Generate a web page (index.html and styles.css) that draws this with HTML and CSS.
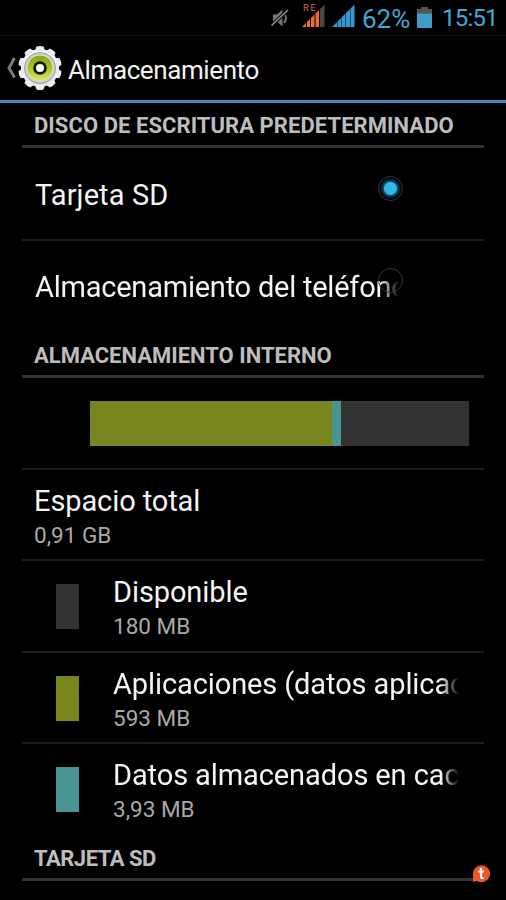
FILE: index.html
```html
<!DOCTYPE html>
<html lang="es">
<head>
<meta charset="utf-8">
<title>Almacenamiento</title>
<link rel="stylesheet" href="styles.css">
</head>
<body>
<div class="statusbar">
  <svg class="icon-mute" width="20" height="22" viewBox="0 0 20 22"><path d="M3 7.500h4l5.500-5v17l-5.500-5H3z" fill="#777"/><path d="M14 6q4 5 0 10" fill="none" stroke="#777" stroke-width="2"/><path d="M1.500 18.500 18 3" stroke="#000" stroke-width="3.600"/><path d="M1.500 18.500 18 3" stroke="#929292" stroke-width="1.600"/></svg>
  <div class="roaming">
    <span class="roaming-label">RE</span>
    <svg width="24" height="24" viewBox="0 0 24 24"><g fill="#f1692c"><path d="M0 23l4-4v4zM5 18l3-3v8H5zM9 14l3.500-3.500V23H9zM13.500 9.500 17 6v17h-3.500z"/></g><path d="M18 5l4.500-4.500V23H18z" fill="#4b4744"/></svg>
  </div>
  <svg class="icon-signal" width="24" height="24" viewBox="0 0 24 24"><path d="M0 23l5-5v5zM5.500 17.500l3.500-3.500v9H5.500zM9.500 13.500l4-4V23h-4zM14 9l4-4v18h-4zM18.500 4.500 22.500.500V23h-4z" fill="#3697cf"/></svg>
  <span class="percent">62%</span>
  <svg class="icon-battery" width="16" height="22" viewBox="0 0 16 22"><path d="M4 0h7v2h4v6H0V2h4z" fill="#555"/><path d="M0 6.500h15V21H0z" fill="#3f9cc7"/></svg>
  <span class="clock">15:51</span>
</div>
<header class="actionbar">
  <svg class="back" width="10" height="22" viewBox="0 0 10 22"><path d="M8.500 1 3 11l5.500 9.500" fill="none" stroke="#7c7c7c" stroke-width="3"/></svg>
  <svg class="gear" width="46" height="46" viewBox="-23 -23 46 46">
    <defs>
      <linearGradient id="rim" x1="0" y1="0" x2="0" y2="1"><stop offset="0" stop-color="#fff"/><stop offset="1" stop-color="#dedee2"/></linearGradient>
      <linearGradient id="green" x1="0" y1="0" x2="0" y2="1"><stop offset="0" stop-color="#86a615"/><stop offset=".5" stop-color="#a8c51c"/><stop offset="1" stop-color="#dbe66c"/></linearGradient>
    </defs>
    <circle r="19" fill="url(#rim)"/>
    <g fill="#ececf0">
      <g id="teeth"><path id="tooth" d="M-5-17l1.500-4.500q3.500-1 7 0L5-17z"/><use href="#tooth" transform="rotate(36)"/><use href="#tooth" transform="rotate(72)"/><use href="#tooth" transform="rotate(108)"/><use href="#tooth" transform="rotate(144)"/></g>
      <use href="#teeth" transform="rotate(180)"/>
    </g>
    <circle r="15.500" fill="#c9cbd5" stroke="#9b9da5" stroke-width="1"/>
    <circle r="13" fill="url(#green)" stroke="#dfe5b4" stroke-width="1"/>
    <circle r="6.800" fill="#11180a"/>
    <circle r="4" fill="#fff"/>
  </svg>
  <h1 class="title">Almacenamiento</h1>
</header>
<main class="list">
  <h2 class="section first"><span>DISCO DE ESCRITURA PREDETERMINADO</span></h2>
  <div class="row choice sd"><span class="name">Tarjeta SD</span><i class="radio on"></i></div>
  <div class="row choice last"><span class="name fade phone">Almacenamiento del teléfono</span><i class="radio"></i></div>
  <h2 class="section"><span>ALMACENAMIENTO INTERNO</span></h2>
  <div class="row usage"><div class="bar"><i class="apps"></i><i class="cache"></i></div></div>
  <div class="row total"><div class="text"><span class="name">Espacio total</span><span class="value">0,91 GB</span></div></div>
  <div class="row item"><i class="swatch free"></i><div class="text"><span class="name">Disponible</span><span class="value">180 MB</span></div></div>
  <div class="row item"><i class="swatch apps"></i><div class="text"><span class="name fade">Aplicaciones (datos aplicación)</span><span class="value">593 MB</span></div></div>
  <div class="row item last end"><i class="swatch cache"></i><div class="text"><span class="name fade">Datos almacenados en caché</span><span class="value">3,93 MB</span></div></div>
  <h2 class="section card"><span>TARJETA SD</span></h2>
</main>
<svg class="badge" width="20" height="20" viewBox="0 0 20 20"><path d="M2 18V10A8.500 8.500 0 1 1 6 17z" fill="#ef5722"/><path d="M10 4v8.500q0 2 2.500 1.500M7 7.500h6" fill="none" stroke="#fff" stroke-width="2.200"/></svg>
</body>
</html>
```

FILE: styles.css
```css
* { box-sizing: border-box; }
body { margin: 0; width: 506px; height: 900px; overflow: hidden; background: #000; color: #f4f4f4; font-family: Roboto, "Liberation Sans", sans-serif; position: relative; }
svg { display: block; flex: none; }
.statusbar { height: 36px; display: flex; align-items: flex-start; color: #45a7d6; border-bottom: 1px solid #0c0c0c; white-space: nowrap; }
.icon-mute { margin: 7px 0 0 270px; }
.roaming { position: relative; margin: 4px 0 0 12px; width: 24px; }
.roaming-label { position: absolute; left: 1px; top: -1px; font-size: 9px; line-height: 10px; letter-spacing: 2px; color: #d96b48; }
.icon-signal { margin: 4px 0 0 6px; }
.percent { width: 54px; margin: 3px 0 0 6px; font-size: 26px; line-height: 32px; }
.icon-battery { margin: 7px 0 0 1px; }
.clock { margin: 2px 0 0 9px; font-size: 24px; line-height: 32px; letter-spacing: -.8px; }
.actionbar { height: 67px; display: flex; align-items: center; border-bottom: 3px solid #4786b8; }
.back { margin-left: 6px; }
.gear { margin-left: 1px; }
.title { margin: 4px 0 0 5px; font-size: 26px; font-weight: 400; line-height: 34px; letter-spacing: -.4px; }
.list { margin: 0 22px; }
.section { margin: 0; height: 46px; border-bottom: 3px solid #323232; padding: 9px 0 0 12px; color: #bdbdbd; font-size: 22px; line-height: 30px; font-weight: 700; white-space: nowrap; }
.section.first { height: 45px; padding-top: 8px; letter-spacing: .06px; }
.section.card { letter-spacing: -.5px; }
.row { height: 91.5px; border-bottom: 2px solid #1d1d1d; display: flex; }
.row.last { border-bottom-color: transparent; }
.name { display: block; font-size: 29px; line-height: 34px; letter-spacing: -.1px; white-space: nowrap; overflow: hidden; }
.value { display: block; font-size: 22.5px; line-height: 28px; margin-top: 3px; color: #a9a9a9; }
.choice { position: relative; padding: 29px 0 0 13px; }
.choice.sd { height: 92.5px; padding-top: 30px; }
.sd .name { letter-spacing: .1px; }
.phone { width: 364px; letter-spacing: -.23px; }
.fade { mask-image: linear-gradient(to right, #000 calc(100% - 18px), transparent); }
.radio { position: absolute; left: 356px; top: 27px; width: 25px; height: 25px; border: 1.5px solid #303a40; border-radius: 50%; }
.on { top: 28px; background: radial-gradient(circle, #36b5ea 0 6px, #075071 7px, #03202d 9px, #000 11px); }
.usage { padding: 23px 0 0 68px; }
.bar { width: 379px; height: 45px; background: #333; display: flex; }
.bar .apps { width: 242px; }
.bar .cache { width: 9px; }
.apps { background: #7a851d; }
.cache { background: #489593; }
.free { background: #343434; }
.total { padding: 14px 0 0 12px; }
.item { padding: 14px 0 0 34px; }
.row.end { height: 90.5px; }
.swatch { width: 23px; height: 45px; margin-top: 9px; }
.item .text { margin-left: 34px; width: 346px; }
.badge { position: absolute; left: 471px; top: 864px; }
```
